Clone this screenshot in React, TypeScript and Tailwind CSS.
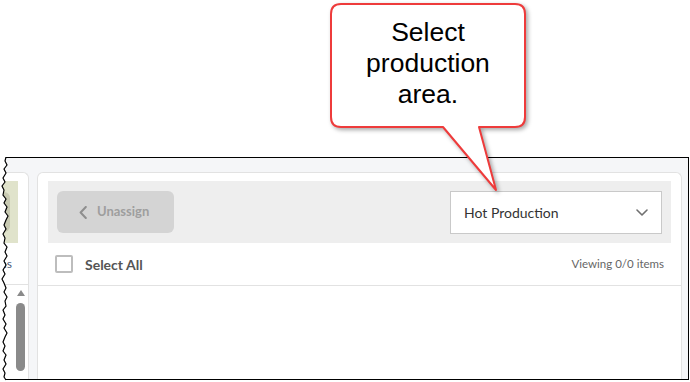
// jagged "torn paper" edge on the left of the pasted screenshot
const tornPoints = [
  [6, 0], [5, 4], [7, 8], [4, 12], [6, 16], [3, 21], [5, 25], [2, 29], [4, 33], [3, 38],
  [6, 42], [4, 46], [7, 50], [5, 55], [8, 59], [6, 63], [4, 68], [6, 72], [3, 77], [5, 81],
  [4, 86], [7, 90], [5, 95], [7, 99], [4, 104], [6, 108], [3, 113], [5, 117], [2, 122], [4, 126],
  [6, 131], [4, 135], [7, 140], [5, 144], [6, 149], [3, 153], [5, 158], [3, 162], [6, 167], [4, 171],
  [7, 176], [5, 180], [3, 185], [5, 189], [3, 194], [6, 198], [4, 203], [6, 207], [3, 212], [5, 216],
  [4, 220], [6, 223],
];

function TornEdge() {
  const line = tornPoints.map(([x, y]) => `${x},${y}`).join(" ");
  return (
    <svg className="absolute left-0 top-[157px]" width="12" height="225" viewBox="0 0 12 225">
      <polygon points={`0,0 ${line} 0,223`} fill="white" />
      <polyline points={line} fill="none" stroke="black" strokeWidth="1.2" />
    </svg>
  );
}

function Callout() {
  return (
    <>
      <svg
        className="absolute left-0 top-0 pointer-events-none drop-shadow-[2px_2px_2px_rgba(0,0,0,0.35)]"
        width="690"
        height="200"
        viewBox="0 0 690 200"
      >
        <path
          d="M 341 4 H 515 Q 525 4 525 14 V 117 Q 525 127 515 127 H 479 L 496 190 L 443 127 H 341 Q 331 127 331 117 V 14 Q 331 4 341 4 Z"
          fill="white"
          stroke="#ee3b3b"
          strokeWidth="2"
          strokeLinejoin="round"
        />
      </svg>
      <div className="absolute left-[331px] top-[17px] w-[194px] text-center text-[26.5px] leading-[31px] text-black font-['Liberation_Sans',Arial,sans-serif]">
        Select
        <br />
        production
        <br />
        area.
      </div>
    </>
  );
}

function LeftPanel() {
  return (
    <div className="w-[29px] shrink-0 flex flex-col items-end pt-[8px] bg-white border-t border-r border-[#e2e2e2] rounded-tr-[6px]">
      <div className="w-[18px] h-[62px] mr-[10px] bg-[#e0e3cb] flex items-center">
        <div className="w-[10px] h-[40px] rounded-r-[6px] bg-[#c8cab2]" />
      </div>
      <div className="w-full h-[42px] border-b border-[#e2e2e2] flex items-center justify-end pr-[16px]">
        <span className="text-[12px] text-[#4a5a7a]">ns</span>
      </div>
      <div className="w-[9px] mr-[3px] pt-[5px] flex flex-col items-center">
        <div className="w-0 h-0 border-l-[4.5px] border-r-[4.5px] border-b-[6px] border-l-transparent border-r-transparent border-b-[#8a8a8a]" />
        <div className="mt-[7px] w-[9px] h-[68px] rounded-full bg-[#8a8a8a]" />
      </div>
    </div>
  );
}

function MainPanel() {
  return (
    <div className="w-[645px] shrink-0 bg-white border-t border-l border-r border-[#e2e2e2] rounded-t-[6px] pt-[8px] px-[10px]">
      <div className="h-[62px] bg-[#eeeeee] flex items-center justify-between px-[9px]">
        <button className="w-[117px] h-[42px] rounded-[6px] bg-[#d4d4d4] flex items-center pl-[22px] gap-[10px] text-[#9e9e9e] text-[13px] font-bold">
          <svg width="8" height="13" viewBox="0 0 8 13" fill="none">
            <path d="M6.8 1 L1.6 6.5 L6.8 12" stroke="#8e8e8e" strokeWidth="2" strokeLinecap="round" strokeLinejoin="round" />
          </svg>
          Unassign
        </button>
        <div className="w-[212px] h-[43px] bg-white border border-[#c9c9c9] flex items-center justify-between pl-[13px] pr-[13px]">
          <span className="text-[14px] text-[#333333]">Hot Production</span>
          <svg width="12" height="7" viewBox="0 0 12 7" fill="none">
            <path d="M1 1 L6 6 L11 1" stroke="#707070" strokeWidth="1.6" strokeLinecap="round" strokeLinejoin="round" />
          </svg>
        </div>
      </div>
      <div className="h-[43px] -mx-[10px] px-[17px] border-b border-[#e2e2e2] flex items-center justify-between">
        <div className="flex items-center gap-[12px]">
          <div className="w-[18px] h-[18px] border-2 border-[#bdbdbd] rounded-[2px] bg-white" />
          <span className="text-[14px] font-bold text-[#555555]">Select All</span>
        </div>
        <span className="text-[11.5px] text-[#666666]">Viewing 0/0 items</span>
      </div>
    </div>
  );
}

export default function App() {
  return (
    <div className="relative w-[690px] h-[382px] overflow-hidden bg-white font-['Lato',sans-serif]">
      <div className="h-[157px]" />
      <div className="w-[689px] h-[223px] border-t border-r border-b border-black bg-[#f5f6f8] flex gap-[8px] pt-[14px] overflow-hidden">
        <LeftPanel />
        <MainPanel />
      </div>
      <TornEdge />
      <Callout />
    </div>
  );
}
